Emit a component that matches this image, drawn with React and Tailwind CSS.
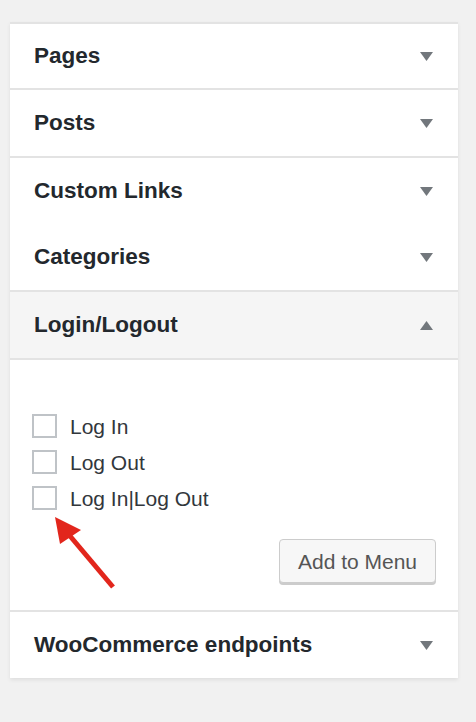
import React from "react";

const font = { fontFamily: '"Liberation Sans", Arial, sans-serif' };

function Caret({ up }) {
    return (
        <svg width="13" height="9" viewBox="0 0 13 9" className="shrink-0">
            {up ? (
                <polygon points="0,9 13,9 6.5,0" fill="#72777c" />
            ) : (
                <polygon points="0,0 13,0 6.5,9" fill="#72777c" />
            )}
        </svg>
    );
}

function Header({ title, up, active, tall = true, border = true }) {
    return (
        <div
            className={
                (tall ? "h-[66px] " : "h-[64px] ") +
                (active ? "bg-[#f5f5f5] " : "bg-white ") +
                (border ? "border-b-2 border-[#e3e3e3] " : "") +
                "flex items-center justify-between pl-6 pr-[25px] box-content"
            }
        >
            <span className="text-[22.5px] font-bold text-[#23282d] leading-none">{title}</span>
            <Caret up={up} />
        </div>
    );
}

function CheckRow({ label }) {
    return (
        <label className="h-9 flex items-center">
            <span className="w-[25px] h-[24px] border-2 border-[#bfc3c7] bg-white shrink-0" />
            <span className="ml-[13px] text-[21px] text-[#32373c] leading-none">{label}</span>
        </label>
    );
}

export default function App() {
    return (
        <div className="min-h-[722px] bg-[#f1f1f1] pt-[22px] pl-[10px] pr-[18px]" style={font}>
            <div className="bg-white border-t-2 border-[#e3e3e3] shadow-[0_2px_4px_rgba(0,0,0,0.08)]">
                <Header title="Pages" tall={false} />
                <Header title="Posts" />
                <Header title="Custom Links" border={false} />
                <Header title="Categories" />
                <Header title="Login/Logout" up active />
                <div className="relative border-b-2 border-[#e3e3e3] pt-12 pl-[22px] pr-[22px] pb-[27px] box-content">
                    <CheckRow label="Log In" />
                    <CheckRow label="Log Out" />
                    <CheckRow label="Log In|Log Out" />
                    <div className="flex justify-end mt-[23px]">
                        <button className="h-[44px] w-[157px] rounded-[4px] border border-[#cccccc] bg-[#f7f7f7] shadow-[0_2px_0_#cccccc] text-[21px] text-[#555555] leading-none">
                            Add to Menu
                        </button>
                    </div>
                    <svg
                        className="absolute left-0 top-0 pointer-events-none"
                        width="448"
                        height="250"
                        viewBox="0 0 448 250"
                    >
                        <line x1="60" y1="176" x2="103" y2="227" stroke="#e2261c" strokeWidth="5" />
                        <polygon points="45,157 50,184 71,170" fill="#e2261c" />
                    </svg>
                </div>
                <Header title="WooCommerce endpoints" border={false} />
            </div>
        </div>
    );
}
